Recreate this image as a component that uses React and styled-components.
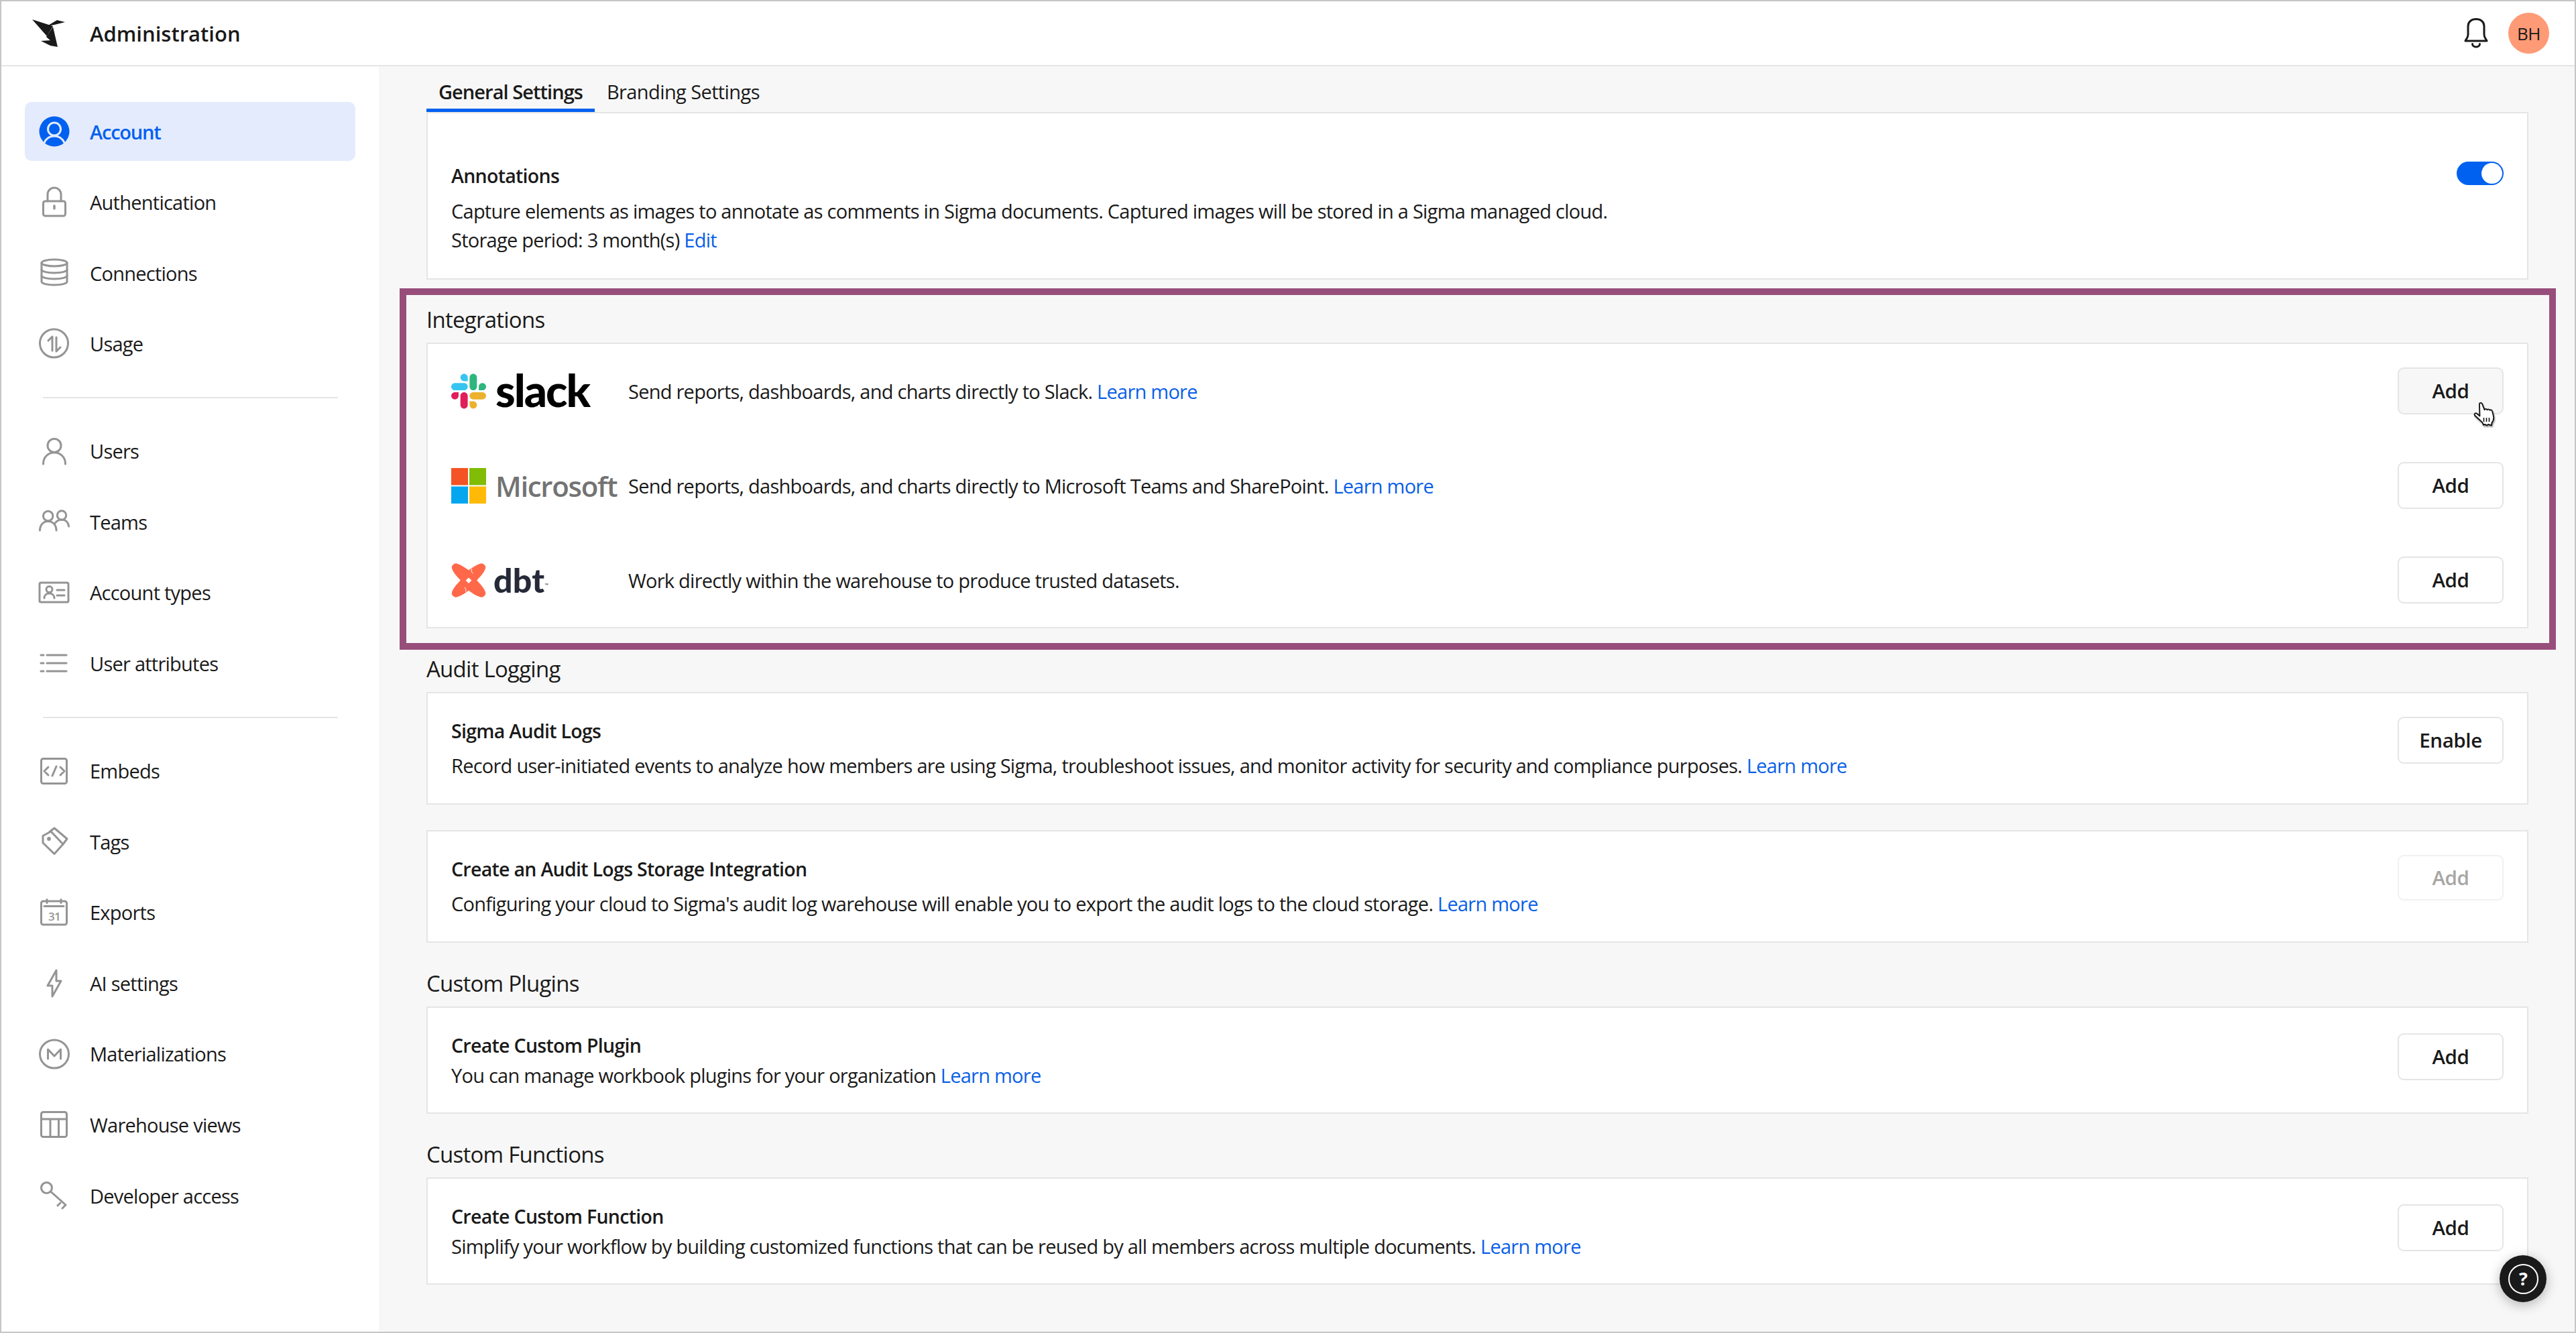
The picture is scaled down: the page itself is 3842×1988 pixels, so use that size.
import React from "react";
import styled, { createGlobalStyle } from "styled-components";

const Global = createGlobalStyle`
  * { box-sizing: border-box; }
  html, body { margin: 0; padding: 0; background: #fff; }
  body { font-family: "Open Sans", "Noto Sans", sans-serif; color: #1a1a1a; font-size: 29px; letter-spacing: -0.75px; }
  #root { width: 100vw; height: 100vh; }
`;

const Shell = styled.div`
  position: relative;
  width: 100%;
  height: 100%;
  border: 2px solid #c6c6c6;
  display: flex;
  flex-direction: column;
  overflow: hidden;
  background: #fff;
`;
const Header = styled.header`
  height: 97px;
  flex: none;
  border-bottom: 2px solid #e5e5e5;
  display: flex;
  align-items: center;
  padding: 0 38px 0 46px;
`;
const Brand = styled.svg`
  width: 49px;
  height: 41px;
  flex: none;
`;
const Title = styled.h1`
  margin: 0 0 0 37px;
  font-size: 31px;
  font-weight: 600;
  letter-spacing: 0;
  line-height: 44px;
  flex: 1;
`;
const Bell = styled.svg`
  width: 36px;
  height: 45px;
  flex: none;
  margin-right: 30px;
`;
const Avatar = styled.div`
  width: 61px;
  height: 61px;
  border-radius: 50%;
  background: #ff9a76;
  display: flex;
  align-items: center;
  justify-content: center;
  font-size: 26px;
  letter-spacing: -0.5px;
`;
const Body = styled.div`
  flex: 1;
  display: flex;
  min-height: 0;
`;
const Sidebar = styled.nav`
  width: 563px;
  flex: none;
  padding: 53px 35px 0;
  display: flex;
  flex-direction: column;
  gap: 17.6px;
  background: #fff;
`;
const NavItem = styled.a`
  height: 88px;
  flex: none;
  display: flex;
  align-items: center;
  gap: 29px;
  padding-left: 20px;
  border-radius: 10px;
  background: ${(p) => (p.$active ? "#e4ebfc" : "transparent")};
  color: ${(p) => (p.$active ? "#0061f0" : "#1a1a1a")};
  font-weight: ${(p) => (p.$active ? 600 : 400)};
  letter-spacing: ${(p) => (p.$active ? -1.2 : -0.75)}px;
`;
const NavDivider = styled.hr`
  border: 0;
  height: 2px;
  flex: none;
  margin: 17.4px 26px 17.4px 27px;
  background: #e5e5e5;
`;
const NavIcon = styled.svg`
  width: 48px;
  height: 48px;
  flex: none;
  fill: none;
  stroke: #949494;
  stroke-width: 3;
  stroke-linecap: round;
  stroke-linejoin: round;
`;
const ActiveNavIcon = styled(NavIcon)`
  stroke: #e4ebfc;
`;
const Main = styled.main`
  flex: 1;
  min-width: 0;
  background: #f7f7f7;
  padding: 0 69px 0 71px;
`;
const Tabs = styled.div`
  height: 68px;
  display: flex;
  align-items: flex-end;
`;
const Tab = styled.div`
  height: 68px;
  padding: 16px 18px 0;
  line-height: 44px;
  font-weight: ${(p) => (p.$active ? 600 : 400)};
  letter-spacing: ${(p) => (p.$active ? -0.95 : -0.6)}px;
  border-bottom: 5px solid ${(p) => (p.$active ? "#0061f0" : "transparent")};
`;
const Card = styled.section`
  background: #fff;
  border: 2px solid #e5e5e5;
  display: flex;
  justify-content: space-between;
  align-items: flex-start;
  padding: ${(p) => p.$top ?? 35}px 35px ${(p) => p.$bottom ?? 33}px 35px;
  margin-top: ${(p) => p.$mt ?? 0}px;
`;
const CardText = styled.div`
  display: flex;
  flex-direction: column;
  gap: ${(p) => p.$gap}px;
`;
const CardTitle = styled.div`
  font-weight: 600;
  font-size: 28.5px;
  letter-spacing: -0.7px;
  line-height: 43px;
`;
const Line = styled.div`
  line-height: 43px;
`;
const Link = styled.a`
  color: #0a5fe8;
`;
const Button = styled.button`
  width: 158px;
  height: ${(p) => (p.$disabled ? 68 : 70)}px;
  flex: none;
  margin-top: ${(p) => p.$mt ?? 0}px;
  border: 2px solid ${(p) => (p.$disabled ? "#f1f1f1" : "#e5e5e5")};
  border-radius: 9px;
  background: ${(p) => (p.$hover ? "#f7f7f7" : "#fff")};
  color: ${(p) => (p.$disabled ? "#a6a6a6" : "#1a1a1a")};
  font: 600 29.5px "Open Sans", sans-serif;
  letter-spacing: -0.4px;
  padding: 0 0 2px;
`;
const Toggle = styled.div`
  width: 70px;
  height: 35px;
  flex: none;
  border-radius: 18px;
  background: #0061f0;
  display: flex;
  justify-content: flex-end;
  align-items: center;
  padding: 0 2px;
`;
const Thumb = styled.div`
  width: 31px;
  height: 31px;
  border-radius: 50%;
  background: #fff;
`;
const Frame = styled.div`
  margin: 13px -41px 0 -40px;
  padding: 15px 31px 22px 30px;
  border: 10px solid #984e7b;
`;
const Heading = styled.h2`
  margin: ${(p) => p.$mt ?? 39}px 0 0;
  padding-bottom: 12px;
  font-size: 33px;
  font-weight: 400;
  line-height: 44px;
`;
const Rows = styled.div`
  flex: 1;
  display: flex;
  flex-direction: column;
  gap: 71px;
`;
const Row = styled.div`
  height: 70px;
  display: flex;
  align-items: center;
`;
const LogoCell = styled.div`
  width: 264px;
  flex: none;
  display: flex;
  align-items: center;
`;
const RowText = styled.div`
  flex: 1;
`;
const Mark = styled.svg`
  width: 52px;
  height: 53px;
  flex: none;
`;
const SlackWord = styled.span`
  margin: 0 0 4px 14px;
  font-family: "Lato", sans-serif;
  font-weight: 900;
  font-size: 67px;
  line-height: 60px;
  letter-spacing: -2px;
  color: #000;
`;
const MsWord = styled.span`
  margin-left: 14px;
  font-weight: 600;
  font-size: 42px;
  letter-spacing: -1.3px;
  color: #737373;
  white-space: nowrap;
`;
const DbtWord = styled.span`
  margin-left: 11px;
  font-family: "Lato", sans-serif;
  font-weight: 900;
  font-size: 50px;
  line-height: 60px;
  letter-spacing: 0.3px;
  color: #262a38;
`;
const Tm = styled.span`
  font-size: 7px;
  letter-spacing: 0;
  font-weight: 400;
  align-self: flex-end;
  margin-bottom: 18px;
  color: #262a38;
`;
const ButtonWrap = styled.div`
  position: relative;
  flex: none;
`;
const Cursor = styled.svg`
  position: absolute;
  left: 113px;
  top: 52px;
  width: 32px;
  height: 36px;
  filter: drop-shadow(1px 2px 1px rgba(0, 0, 0, 0.45));
`;
const Help = styled.div`
  position: absolute;
  right: 42px;
  bottom: 44px;
  width: 70px;
  height: 70px;
  border-radius: 50%;
  background: #1a1a1a;
  box-shadow: 0 4px 18px rgba(0, 0, 0, 0.28);
  display: flex;
  align-items: center;
  justify-content: center;
`;
const HelpRing = styled.div`
  width: 45px;
  height: 45px;
  border: 2.5px solid #fff;
  border-radius: 50%;
  color: #fff;
  font-weight: 700;
  font-size: 27px;
  line-height: 40px;
  text-align: center;
`;

const Icons = {
  auth: (
    <>
      <rect x="7.5" y="22" width="33" height="22" rx="3" />
      <path d="M14 22V12a10 10 0 0 1 20 0v10" />
      <path d="M24 29v4" strokeWidth="3.5" />
    </>
  ),
  conn: (
    <>
      <ellipse cx="24" cy="9" rx="19" ry="5" />
      <path d="M5 9v28c0 3 8.5 5 19 5s19-2 19-5V9" />
      <path d="M5 19c0 3 8.5 5 19 5s19-2 19-5" />
      <path d="M5 28c0 3 8.5 5 19 5s19-2 19-5" />
    </>
  ),
  usage: (
    <>
      <circle cx="23.5" cy="23" r="21" />
      <path d="M21 34V13l-6 6" />
      <path d="M27 14v21l6-6" />
    </>
  ),
  user: (
    <>
      <circle cx="24" cy="15.5" r="10" />
      <path d="M7.5 43c0-10 7-17 16.5-17s16.5 7 16.5 17" />
    </>
  ),
  team: (
    <>
      <circle cx="14.7" cy="15.5" r="7.2" />
      <circle cx="35" cy="14.5" r="6.7" />
      <path d="M2.5 37c0-8 5-13.5 12.2-13.5S27 29 27 37" />
      <path d="M24.500 27c2-3 6-6 10.500-6 6 0 10 4 10.500 10" />
    </>
  ),
  types: (
    <>
      <rect x="2" y="9" width="43" height="29" rx="2" />
      <circle cx="16.500" cy="19" r="4.500" />
      <path d="M9 32c0-4 3-7 7.500-7s7.500 3 7.500 7" />
      <path d="M28 20h11M28 28h11" />
    </>
  ),
  attrs: (
    <>
      <path d="M4 11h4M4 23h4M4 35h4" />
      <path d="M13 11h29M13 23h29M13 35h29" />
    </>
  ),
  embed: (
    <>
      <rect x="4.500" y="5.500" width="38" height="37" rx="3" />
      <path d="M15 18l-6 6 6 6M33 18l6 6-6 6M27 17l-6 14" />
    </>
  ),
  tags: (
    <>
      <path d="M7 15.500 19 9l18 19-13 14.500L7 26z" />
      <path d="M17 9.500 24 4l19 16-6 8" />
      <circle cx="16" cy="20" r="1.400" fill="#949494" />
    </>
  ),
  exports: (
    <>
      <rect x="4.500" y="7" width="38" height="35" rx="3" />
      <path d="M13 4.500v5M34 4.500v5M9 14.500h29" />
      <text x="24" y="36" textAnchor="middle" fontSize="17" fontWeight="600" fill="#949494" stroke="none" fontFamily="Open Sans">31</text>
    </>
  ),
  ai: <path d="M27 5 14 28h7v16l13-23h-7z" />,
  mat: (
    <>
      <ellipse cx="24" cy="24" rx="21.500" ry="21" />
      <path d="M14.500 31V17l9.500 10 9.500-10v14" />
    </>
  ),
  wh: (
    <>
      <rect x="4.500" y="5.500" width="38" height="37" rx="3" />
      <path d="M4.500 16h38M18 16v26.500M30.500 16v26.500" />
    </>
  ),
  key: (
    <>
      <circle cx="12.500" cy="12.500" r="8" />
      <path d="M18.500 18 41 38l-5 5M33 35l-4 4" />
    </>
  ),
};

const navGroups = [
  [
    ["auth", "Authentication"],
    ["conn", "Connections"],
    ["usage", "Usage"],
  ],
  [
    ["user", "Users"],
    ["team", "Teams"],
    ["types", "Account types"],
    ["attrs", "User attributes"],
  ],
  [
    ["embed", "Embeds"],
    ["tags", "Tags"],
    ["exports", "Exports"],
    ["ai", "AI settings"],
    ["mat", "Materializations"],
    ["wh", "Warehouse views"],
    ["key", "Developer access"],
  ],
];

const AccountIcon = () => (
  <ActiveNavIcon viewBox="0 0 48 48">
    <circle cx="24" cy="24" r="22.500" fill="#0061f0" stroke="none" />
    <circle cx="24" cy="20.500" r="9.500" />
    <path d="M9 41c3-7 8-10 15-10s12 3 15 10" />
  </ActiveNavIcon>
);

const NavRow = ({ icon, label }) => (
  <NavItem>
    <NavIcon viewBox="0 0 48 48">{Icons[icon]}</NavIcon>
    {label}
  </NavItem>
);

const SlackMark = () => (
  <Mark viewBox="0 0 122.8 122.8">
    <path fill="#e01e5a" d="M25.800 77.600c0 7.100-5.800 12.900-12.900 12.900S0 84.700 0 77.600s5.800-12.900 12.900-12.900h12.900v12.900z" />
    <path fill="#e01e5a" d="M32.300 77.600c0-7.100 5.800-12.900 12.900-12.900s12.900 5.800 12.900 12.900v32.300c0 7.100-5.800 12.900-12.900 12.900s-12.900-5.800-12.900-12.900V77.600z" />
    <path fill="#36c5f0" d="M45.200 25.800c-7.100 0-12.900-5.800-12.900-12.900S38.100 0 45.200 0s12.900 5.800 12.900 12.900v12.900H45.200z" />
    <path fill="#36c5f0" d="M45.200 32.300c7.100 0 12.900 5.800 12.900 12.900s-5.800 12.900-12.900 12.900H12.900C5.800 58.100 0 52.300 0 45.200s5.800-12.900 12.900-12.900h32.300z" />
    <path fill="#2eb67d" d="M97 45.200c0-7.100 5.800-12.900 12.900-12.900s12.900 5.800 12.900 12.900-5.800 12.900-12.900 12.900H97V45.200z" />
    <path fill="#2eb67d" d="M90.500 45.200c0 7.100-5.800 12.900-12.900 12.900s-12.900-5.800-12.900-12.900V12.900C64.700 5.800 70.500 0 77.600 0s12.900 5.800 12.900 12.900v32.300z" />
    <path fill="#ecb22e" d="M77.600 97c7.100 0 12.900 5.800 12.900 12.900s-5.800 12.900-12.900 12.900-12.900-5.800-12.900-12.900V97h12.900z" />
    <path fill="#ecb22e" d="M77.600 90.500c-7.100 0-12.900-5.800-12.900-12.900s5.800-12.900 12.900-12.900h32.300c7.100 0 12.900 5.800 12.900 12.900s-5.800 12.900-12.900 12.900H77.600z" />
  </Mark>
);

const MsMark = () => (
  <Mark viewBox="0 0 52 53">
    <rect x="0" y="0" width="25" height="25.500" fill="#f35325" />
    <rect x="27" y="0" width="25" height="25.500" fill="#81bc06" />
    <rect x="0" y="27.500" width="25" height="25.500" fill="#05a6f0" />
    <rect x="27" y="27.500" width="25" height="25.500" fill="#ffba08" />
  </Mark>
);

const DbtLogo = () => (
  <Mark viewBox="0 0 53 53">
    <path
      fill="#ff694a"
      d="M3 2.500Q5 0 8.500 1C15 3 21 7 26.500 11C32 7 38 3 44.500 1Q48 0 50 2.500Q53 5 52 8.500C50 15 44 21 39 26.500C44 32 50 38 52 44.500Q53 48 50 50.500Q48 53 44.500 52C38 50 32 46 26.500 42C21 46 15 50 8.500 52Q5 53 3 50.500Q0 48 1 44.500C3 38 9 32 14 26.500C9 21 3 15 1 8.500Q0 5 3 2.500Z"
    />
    <path fill="#fff" d="M26.500 22.500 31 26.500 26.500 31 22 26.500Z" />
    <path fill="none" stroke="#fff" strokeWidth="1" d="M31 9c-1 3 0 5 2 7M22 44c1-3 0-5-2-7" />
  </Mark>
);

const HandCursor = () => (
  <Cursor viewBox="0 0 32 36">
    <path
      d="M9 3c-.5-2.500 3-3 4-.8l3.500 9c.5-1.800 3.300-1.800 4 .2.600-1.600 3.300-1.400 4 .5.800-1.200 3-.8 3.500 1l2 8c.8 4-.5 7-2.500 9.500l-.5 4-5-1.500-2 1.500-3-1.500-2 .8-1.500-3.500L2 19.500c-1.300-1.800.8-4 2.800-3l4.700 4z"
      fill="#fff"
      stroke="#111"
      strokeWidth="1.800"
      strokeLinejoin="round"
    />
    <path d="M15.500 23v6M19.500 23v6M23.500 23v6" stroke="#111" strokeWidth="1.600" />
  </Cursor>
);

export default function App() {
  return (
    <>
      <Global />
      <Shell>
        <Header>
          <Brand viewBox="0 0 49 41">
            <polygon points="0,0 31,10 22,25" fill="#1a1a1a" />
            <polygon points="31,11 38,41 21,26" fill="#1a1a1a" />
            <polygon points="22,10 37,1 49,4 33,8" fill="#1a1a1a" />
            <polygon points="13,32 29,31 38,41 27,39" fill="#1a1a1a" />
          </Brand>
          <Title>Administration</Title>
          <Bell viewBox="0 0 36 45" fill="none" stroke="#1a1a1a" strokeWidth="3" strokeLinecap="round" strokeLinejoin="round">
            <path d="M2 34c0-1.500 3.500-3 4-9V12C6 5.500 11 1.500 18 1.500S30 5.500 30 12v13c.5 6 4 7.500 4 9z" />
            <path d="M12.500 38.500c0 6 11 6 11 0" />
          </Bell>
          <Avatar>BH</Avatar>
        </Header>
        <Body>
          <Sidebar>
            <NavItem $active>
              <AccountIcon />
              Account
            </NavItem>
            {navGroups.map((group, i) => (
              <React.Fragment key={i}>
                {i > 0 && <NavDivider />}
                {group.map(([icon, label]) => (
                  <NavRow key={label} icon={icon} label={label} />
                ))}
              </React.Fragment>
            ))}
          </Sidebar>
          <Main>
            <Tabs>
              <Tab $active>General Settings</Tab>
              <Tab>Branding Settings</Tab>
            </Tabs>
            <Card $top={72} $bottom={36}>
              <CardText $gap={9}>
                <CardTitle>Annotations</CardTitle>
                <div>
                  <Line>Capture elements as images to annotate as comments in Sigma documents. Captured images will be stored in a Sigma managed cloud.</Line>
                  <Line>
                    Storage period: 3 month(s) <Link>Edit</Link>
                  </Line>
                </div>
              </CardText>
              <Toggle>
                <Thumb />
              </Toggle>
            </Card>

            <Frame>
              <Heading $mt={0}>Integrations</Heading>
              <Card $bottom={35}>
                <Rows>
                  <Row>
                    <LogoCell>
                      <SlackMark />
                      <SlackWord>slack</SlackWord>
                    </LogoCell>
                    <RowText>
                      Send reports, dashboards, and charts directly to Slack. <Link>Learn more</Link>
                    </RowText>
                    <ButtonWrap>
                      <Button $hover>Add</Button>
                      <HandCursor />
                    </ButtonWrap>
                  </Row>
                  <Row>
                    <LogoCell>
                      <MsMark />
                      <MsWord>Microsoft</MsWord>
                    </LogoCell>
                    <RowText>
                      Send reports, dashboards, and charts directly to Microsoft Teams and SharePoint. <Link>Learn more</Link>
                    </RowText>
                    <Button>Add</Button>
                  </Row>
                  <Row>
                    <LogoCell>
                      <DbtLogo />
                      <DbtWord>dbt</DbtWord>
                      <Tm>™</Tm>
                    </LogoCell>
                    <RowText>Work directly within the warehouse to produce trusted datasets.</RowText>
                    <Button>Add</Button>
                  </Row>
                </Rows>
              </Card>
            </Frame>

            <Heading $mt={7}>Audit Logging</Heading>
            <Card $bottom={35}>
              <CardText $gap={8}>
                <CardTitle>Sigma Audit Logs</CardTitle>
                <Line>
                  Record user-initiated events to analyze how members are using Sigma, troubleshoot issues, and monitor activity for security and compliance purposes. <Link>Learn more</Link>
                </Line>
              </CardText>
              <Button>Enable</Button>
            </Card>
            <Card $mt={38} $bottom={35}>
              <CardText $gap={8}>
                <CardTitle>Create an Audit Logs Storage Integration</CardTitle>
                <Line>
                  Configuring your cloud to Sigma's audit log warehouse will enable you to export the audit logs to the cloud storage. <Link>Learn more</Link>
                </Line>
              </CardText>
              <Button $disabled>Add</Button>
            </Card>

            <Heading>Custom Plugins</Heading>
            <Card $bottom={34}>
              <CardText $gap={1}>
                <CardTitle>Create Custom Plugin</CardTitle>
                <Line>
                  You can manage workbook plugins for your organization <Link>Learn more</Link>
                </Line>
              </CardText>
              <Button $mt={3}>Add</Button>
            </Card>

            <Heading>Custom Functions</Heading>
            <Card $bottom={34}>
              <CardText $gap={1}>
                <CardTitle>Create Custom Function</CardTitle>
                <Line>
                  Simplify your workflow by building customized functions that can be reused by all members across multiple documents. <Link>Learn more</Link>
                </Line>
              </CardText>
              <Button $mt={3}>Add</Button>
            </Card>
          </Main>
        </Body>
        <Help>
          <HelpRing>?</HelpRing>
        </Help>
      </Shell>
    </>
  );
}
